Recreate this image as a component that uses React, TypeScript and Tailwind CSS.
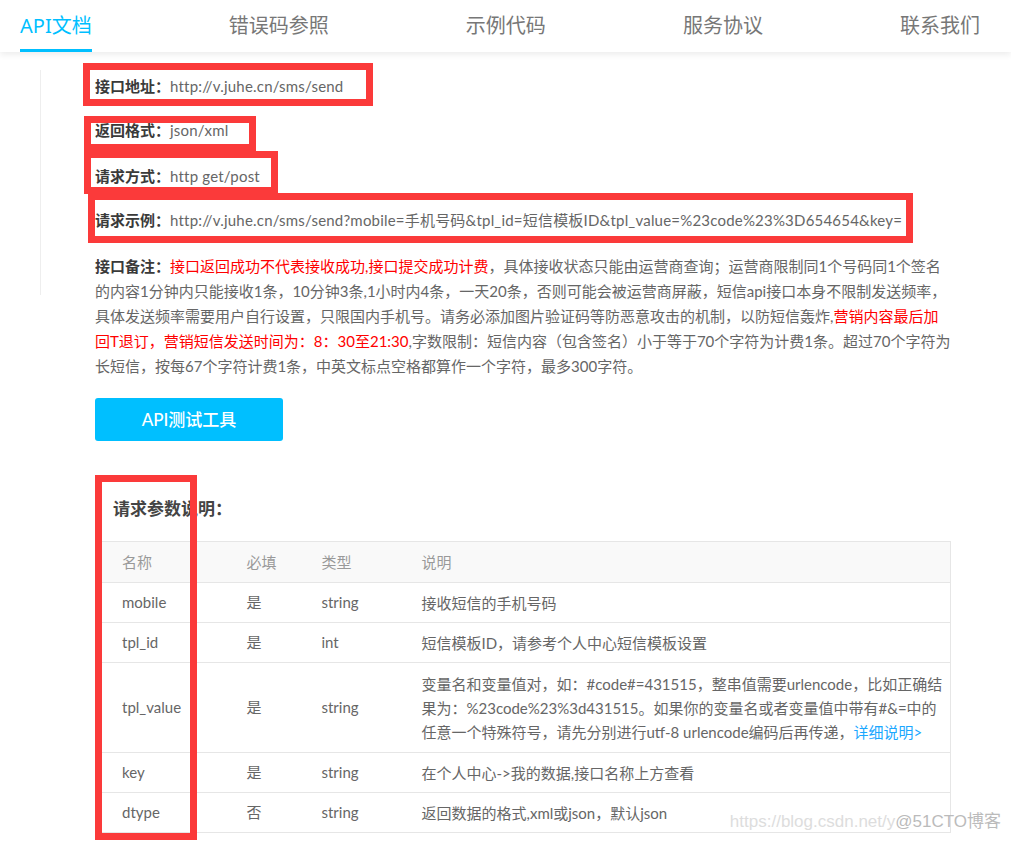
import React from "react";

const tabs = ["API文档", "错误码参照", "示例代码", "服务协议", "联系我们"];

const rows = [
  { name: "mobile", req: "是", type: "string", desc: "接收短信的手机号码" },
  { name: "tpl_id", req: "是", type: "int", desc: "短信模板ID，请参考个人中心短信模板设置" },
  { name: "tpl_value", req: "是", type: "string", desc: "" },
  { name: "key", req: "是", type: "string", desc: "在个人中心->我的数据,接口名称上方查看" },
  { name: "dtype", req: "否", type: "string", desc: "返回数据的格式,xml或json，默认json" },
];

// red annotation boxes drawn over the screenshot
const marks = [
  "left-[83px] top-[63px] w-[290px] h-[43px]",
  "left-[84px] top-[116px] w-[172px] h-[35px]",
  "left-[84px] top-[151px] w-[194px] h-[43px]",
  "left-[88px] top-[193px] w-[825px] h-[50px]",
  "left-[95px] top-[475px] w-[102px] h-[365px]",
];

const Field = ({ label, value, cls }: { label: string; value: string; cls: string }) => (
  <div className={`leading-[24px] whitespace-nowrap ${cls}`}>
    <span className="font-bold text-[#3a3a3a]">{label}</span>
    <span className="text-[#666] tracking-[0.2px]">{value}</span>
  </div>
);

export default function App() {
  return (
    <div className="relative min-h-[841px] bg-white font-['Lato','Noto_Sans_CJK_SC',sans-serif] text-[15px] text-[#666] overflow-hidden">
      <nav className="h-[52px] flex justify-between items-end pl-5 pr-[31px] bg-white shadow-[0_3px_6px_rgba(0,0,0,0.07)] font-['Noto_Sans','Noto_Sans_CJK_SC',sans-serif]">
        {tabs.map((t, i) => (
          <div
            key={t}
            className={`h-full flex items-center text-[20px] leading-none border-b-[3px] pt-[3px] ${
              i === 0 ? "text-[#00bfff] border-[#00bfff]" : "text-[#777] border-transparent"
            }`}
          >
            {t}
          </div>
        ))}
      </nav>

      <section className="relative pl-[95px] pt-[22px]">
        <span className="absolute left-[40px] top-[18px] h-[225px] border-l border-[#eee]" />
        <Field cls="" label="接口地址：" value="http://v.juhe.cn/sms/send" />
        <Field cls="mt-[20px]" label="返回格式：" value="json/xml" />
        <Field cls="mt-[22px]" label="请求方式：" value="http get/post" />
        <Field
          cls="mt-[20px]"
          label="请求示例："
          value="http://v.juhe.cn/sms/send?mobile=手机号码&tpl_id=短信模板ID&tpl_value=%23code%23%3D654654&key="
        />
        <p className="mt-[22px] leading-[25px] whitespace-nowrap">
          <span className="font-bold text-[#3a3a3a]">接口备注：</span>
          <span className="text-[#ff0000]">接口返回成功不代表接收成功,接口提交成功计费</span>
          ，具体接收状态只能由运营商查询；运营商限制同1个号码同1个签名
          <br />
          的内容1分钟内只能接收1条，10分钟3条,1小时内4条，一天20条，否则可能会被运营商屏蔽，短信api接口本身不限制发送频率，
          <br />
          具体发送频率需要用户自行设置，只限国内手机号。请务必添加图片验证码等防恶意攻击的机制，以防短信轰炸,
          <span className="text-[#ff0000]">营销内容最后加</span>
          <br />
          <span className="text-[#ff0000]">回T退订，营销短信发送时间为：8：30至21:30</span>
          ,字数限制：短信内容（包含签名）小于等于70个字符为计费1条。超过70个字符为
          <br />
          长短信，按每67个字符计费1条，中英文标点空格都算作一个字符，最多300字符。
        </p>

        <button className="mt-[19px] w-[188px] h-[43px] rounded-[3px] bg-[#00bfff] text-white text-[17px] font-medium">
          API测试工具
        </button>
      </section>

      <section className="pl-[101px] pr-[60px] pt-[56px]">
        <h3 className="pl-[12px] text-[17px] leading-[24px] font-bold text-[#444]">请求参数说明：</h3>
        <table className="mt-[20px] w-[850px] border-collapse border border-[#e6e6e6] text-left">
          <thead>
            <tr className="h-[41px] bg-[#f9f9f9] text-[#999]">
              <th className="w-[125px] pl-5 font-normal">名称</th>
              <th className="w-[75px] pl-5 font-normal">必填</th>
              <th className="w-[100px] pl-5 font-normal">类型</th>
              <th className="pl-5 font-normal">说明</th>
            </tr>
          </thead>
          <tbody>
            {rows.map((r) => (
              <tr key={r.name} className={`border-t border-[#e6e6e6] ${r.name === "tpl_value" ? "h-[90px]" : "h-[40px]"}`}>
                <td className="pl-5">{r.name}</td>
                <td className="pl-5">{r.req}</td>
                <td className="pl-5">{r.type}</td>
                <td className="pl-5 leading-[24px] whitespace-nowrap">
                  {r.name === "tpl_value" ? (
                    <>
                      变量名和变量值对，如：#code#=431515，整串值需要urlencode，比如正确结
                      <br />
                      果为：%23code%23%3d431515。如果你的变量名或者变量值中带有#&amp;=中的
                      <br />
                      任意一个特殊符号，请先分别进行utf-8 urlencode编码后再传递，
                      <a className="text-[#1aa7ff]">详细说明&gt;</a>
                    </>
                  ) : (
                    r.desc
                  )}
                </td>
              </tr>
            ))}
          </tbody>
        </table>
      </section>

      {marks.map((m) => (
        <div key={m} className={`absolute border-[7px] border-[#fb3a3a] ${m}`} />
      ))}

      <div className="absolute right-[10px] top-[810px] text-[17px] leading-[24px] whitespace-nowrap font-['Liberation_Sans','Noto_Sans_CJK_SC',sans-serif]">
        <span className="text-[#ddd]">https://blog.csdn.net/y</span>
        <span className="text-[#bbb]">@51CTO博客</span>
      </div>
    </div>
  );
}
